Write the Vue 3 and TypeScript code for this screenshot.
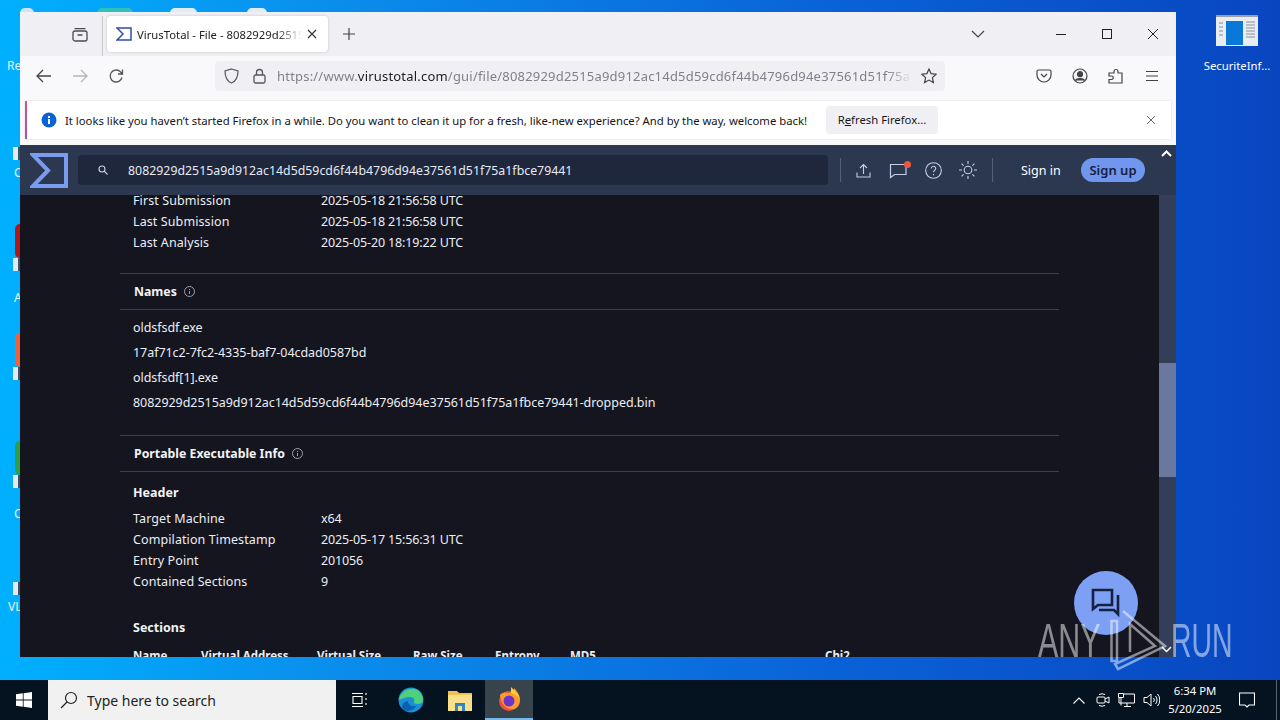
<script setup lang="ts">
const dates = [
  ['First Submission', '2025-05-18 21:56:58 UTC'],
  ['Last Submission', '2025-05-18 21:56:58 UTC'],
  ['Last Analysis', '2025-05-20 18:19:22 UTC'],
]
const names = [
  'oldsfsdf.exe',
  '17af71c2-7fc2-4335-baf7-04cdad0587bd',
  'oldsfsdf[1].exe',
  '8082929d2515a9d912ac14d5d59cd6f44b4796d94e37561d51f75a1fbce79441-dropped.bin',
]
const header = [
  ['Target Machine', 'x64'],
  ['Compilation Timestamp', '2025-05-17 15:56:31 UTC'],
  ['Entry Point', '201056'],
  ['Contained Sections', '9'],
]
const columns = [
  { label: 'Name', width: 68 },
  { label: 'Virtual Address', width: 116 },
  { label: 'Virtual Size', width: 96 },
  { label: 'Raw Size', width: 82 },
  { label: 'Entropy', width: 75 },
  { label: 'MD5', width: 255 },
  { label: 'Chi2', width: 60 },
]
const hash = '8082929d2515a9d912ac14d5d59cd6f44b4796d94e37561d51f75a1fbce79441'
const sideIcons = [
  { top: 147, label: 'C', labelTop: 166, color: '' },
  { top: 258, label: 'A', labelTop: 291, color: '#b0181c' },
  { top: 367, label: '', labelTop: 0, color: '#f0603a' },
  { top: 475, label: 'C', labelTop: 507, color: '#2f9e48' },
  { top: 582, label: 'VL', labelTop: 600, color: '' },
]
</script>

<template>
  <div class="desktop">
    <div class="wallpaper">
      <span class="peek" style="left: 20px; width: 14px; background: #cfe4f2"></span>
      <span class="peek" style="left: 97px; width: 36px; background: #2fc0b8"></span>
      <span class="peek" style="left: 170px; width: 27px; background: #e4ecf2"></span>
      <span class="peek" style="left: 247px; width: 20px; background: #e4ecf2"></span>
      <span class="side-label" style="left: 7px; top: 59px">Re</span>
      <template v-for="item in sideIcons" :key="item.top">
        <span v-if="item.color" class="side-blob" :style="{ top: item.top - 34 + 'px', background: item.color }"></span>
        <span class="side-doc" :style="{ top: item.top + 'px' }"></span>
        <span v-if="item.label" class="side-label" :style="{ left: item.label === 'VL' ? '8px' : '14px', top: item.labelTop + 'px' }">{{ item.label }}</span>
      </template>

      <div class="desk-icon">
        <svg width="42" height="31" viewBox="0 0 42 31">
          <rect width="42" height="31" fill="#e9edf1" />
          <rect width="42" height="2" fill="#9aa0a8" />
          <rect x="10" y="6" width="17" height="24" fill="#0a78d8" />
          <path d="M30 7h9M30 10h9M30 13h9M30 16h9M30 19h9M30 22h9M3 8h4M3 12h4M3 16h4M3 20h4" stroke="#8b9097" stroke-width="1" />
        </svg>
        <span>SecuriteInf...</span>
      </div>

      <section class="window">
        <div class="tabstrip">
          <svg class="ff-view" width="16" height="16" viewBox="0 0 16 16" fill="none" stroke="#4a4a55" stroke-width="1.3">
            <rect x="1" y="5" width="14" height="10" rx="2" />
            <path d="M3 2.600h10M6 9h4" stroke-linecap="round" />
          </svg>
          <div class="tab-sep"></div>
          <div class="tab">
            <svg width="16" height="14" viewBox="0 0 16 14" fill="none">
              <path d="M1 1h14v12H1l6-6z" stroke="#2f4fa8" stroke-width="1.5" />
            </svg>
            <span class="tab-title">VirusTotal - File - 8082929d2515a9d912ac14d5d59cd6f44b</span>
            <svg width="10" height="10" viewBox="0 0 10 10" stroke="#333" stroke-width="1.1"><path d="M1 1l8 8M9 1l-8 8" /></svg>
          </div>
          <svg class="new-tab" width="14" height="14" viewBox="0 0 14 14" stroke="#444" stroke-width="1.2"><path d="M7 1v12M1 7h12" /></svg>
          <svg class="tab-list" width="14" height="8" viewBox="0 0 14 8" fill="none" stroke="#444" stroke-width="1.2"><path d="M1 1l6 6 6-6" /></svg>
          <svg class="win-min" width="12" height="12" viewBox="0 0 12 12" stroke="#222"><path d="M1 6.500h10" /></svg>
          <svg class="win-max" width="12" height="12" viewBox="0 0 12 12" fill="none" stroke="#222"><rect x="1.500" y="1.500" width="9" height="9" /></svg>
          <svg class="win-close" width="12" height="12" viewBox="0 0 12 12" stroke="#222"><path d="M1 1l10 10M11 1L1 11" /></svg>
        </div>

        <div class="toolbar">
          <svg class="tb-back" width="16" height="14" viewBox="0 0 16 14" fill="none" stroke="#444" stroke-width="1.3"><path d="M15 7H1M7 1L1 7l6 6" /></svg>
          <svg class="tb-fwd" width="16" height="14" viewBox="0 0 16 14" fill="none" stroke="#b5b5bb" stroke-width="1.3"><path d="M1 7h14M9 1l6 6-6 6" /></svg>
          <svg class="tb-reload" width="16" height="16" viewBox="0 0 16 16" fill="none" stroke="#555" stroke-width="1.3"><path d="M14 9.500A6 6 0 1 1 11.800 3.200L14 5.500M14.500 1.500V6H10" /></svg>
          <div class="urlbar">
            <svg width="15" height="16" viewBox="0 0 15 16" fill="none" stroke="#55555f" stroke-width="1.2"><path d="M7.500 1L14 3c0 6-1.500 10-6.500 12C2.500 13 1 9 1 3z" /></svg>
            <svg class="lock" width="13" height="16" viewBox="0 0 13 16" fill="none" stroke="#55555f" stroke-width="1.300"><rect x="1" y="7" width="11" height="8" rx="1.500" /><path d="M3.500 7V4.500a3 3 0 0 1 6 0V7" /></svg>
            <span class="url"><span class="url-dim">https://www.</span><span class="url-host">virustotal.com</span><span class="url-dim">/gui/file/{{ hash }}</span></span>
            <svg class="star" width="16" height="16" viewBox="0 0 16 16" fill="none" stroke="#444" stroke-width="1.200"><path d="M8 1l2.100 4.600 5 .6-3.700 3.400 1 5L8 12.100 3.600 14.600l1-5L.9 6.200l5-.6z" /></svg>
          </div>
          <svg class="tb-pocket" width="16" height="14" viewBox="0 0 16 14" fill="none" stroke="#444" stroke-width="1.200"><path d="M1 2.500A1.500 1.500 0 0 1 2.500 1h11A1.500 1.500 0 0 1 15 2.500V6a7 7 0 0 1-14 0z" /><path d="M5 5l3 3 3-3" /></svg>
          <svg class="tb-account" width="16" height="16" viewBox="0 0 16 16" fill="none" stroke="#444" stroke-width="1.200"><circle cx="8" cy="8" r="7" /><circle cx="8" cy="6.200" r="2.500" fill="#444" /><path d="M3.500 12.500c1-2.500 8-2.500 9 0" fill="#444" /></svg>
          <svg class="tb-ext" width="16" height="16" viewBox="0 0 16 16" fill="none" stroke="#444" stroke-width="1.200"><path d="M1 15v-3.500h2.500a1.500 1.500 0 0 0 0-3.500H1V5h5V3.500a2 2 0 0 1 4 0V5h4v10z" /></svg>
          <svg class="tb-menu" width="14" height="12" viewBox="0 0 14 12" stroke="#444" stroke-width="1.200"><path d="M1 1.500h12M1 6h12M1 10.500h12" /></svg>
        </div>

        <div class="notice">
          <div class="notice-box">
            <svg class="notice-i" width="16" height="16" viewBox="0 0 16 16">
              <circle cx="8" cy="8" r="7.500" fill="#0a62d8" />
              <rect x="7" y="7" width="2" height="5" fill="#fff" />
              <rect x="7" y="4" width="2" height="2" fill="#fff" />
            </svg>
            <span class="notice-text">It looks like you haven’t started Firefox in a while. Do you want to clean it up for a fresh, like-new experience? And by the way, welcome back!</span>
            <span class="notice-btn">R<u>e</u>fresh Firefox...</span>
            <svg class="notice-x" width="10" height="10" viewBox="0 0 10 10" stroke="#666" stroke-width="1"><path d="M1 1l8 8M9 1l-8 8" /></svg>
          </div>
        </div>

        <div class="page">
          <header class="nav">
            <svg class="logo" width="38" height="35" viewBox="0 0 38 35" fill="none">
              <path d="M3 2h33v31H3l15-15.500z" stroke="#7a9bee" stroke-width="4" />
            </svg>
            <div class="search">
              <svg width="10" height="10" viewBox="0 0 10 10" fill="none" stroke="#c9d2e4" stroke-width="1.100"><circle cx="4" cy="4" r="3" /><path d="M6.200 6.200L9.500 9.500" /></svg>
              <span>{{ hash }}</span>
            </div>
            <div class="nav-sep"></div>
            <svg class="nav-upload" width="15" height="15" viewBox="0 0 15 15" fill="none" stroke="#c4cee4" stroke-width="1.100"><path d="M1 9.500v4.500h13V9.500M7.500 11V1.500M4 5l3.500-3.500L11 5" /></svg>
            <span class="nav-chat">
              <svg width="19" height="17" viewBox="0 0 19 17" fill="none" stroke="#c4cee4" stroke-width="1.200"><path d="M1.500 2.500h15.500v10H5.500l-4 3z" /></svg>
              <i></i>
            </span>
            <svg class="nav-help" width="17" height="17" viewBox="0 0 17 17" fill="none" stroke="#c4cee4" stroke-width="1.100"><circle cx="8.500" cy="8.500" r="7.800" /><path d="M6.300 6.500a2.200 2.200 0 1 1 3.500 1.800c-.8.600-1.300 1-1.300 2M8.500 12v1.300" /></svg>
            <svg class="nav-sun" width="20" height="20" viewBox="0 0 20 20" fill="none" stroke="#c4cee4" stroke-width="1.100"><circle cx="10" cy="10" r="3.800" /><path d="M10 1v3M10 16v3M1 10h3M16 10h3M3.600 3.600l2 2M14.400 14.400l2 2M3.600 16.400l2-2M14.400 5.600l2-2" /></svg>
            <div class="nav-sep second"></div>
            <span class="signin">Sign in</span>
            <span class="signup">Sign up</span>
            <svg class="scroll-up" width="11" height="7" viewBox="0 0 11 7" fill="none" stroke="#fff" stroke-width="2"><path d="M1 6l4.500-4.500L10 6" /></svg>
          </header>

          <div class="body">
            <main class="content">
              <div class="pad first">
                <div v-for="row in dates" :key="row[0]" class="row">
                  <span class="key">{{ row[0] }}</span><span class="val">{{ row[1] }}</span>
                </div>
              </div>

              <h2 class="section-head names-head">Names
                <svg width="11" height="11" viewBox="0 0 11 11" fill="none" stroke="#9ca0ac"><circle cx="5.500" cy="5.500" r="5" /><path d="M5.500 5v3M5.500 3v1" /></svg>
              </h2>
              <div class="pad names">
                <div v-for="name in names" :key="name" class="name">{{ name }}</div>
              </div>

              <h2 class="section-head pe-head">Portable Executable Info
                <svg width="11" height="11" viewBox="0 0 11 11" fill="none" stroke="#9ca0ac"><circle cx="5.500" cy="5.500" r="5" /><path d="M5.500 5v3M5.500 3v1" /></svg>
              </h2>
              <div class="pad">
                <h3 class="sub header-title">Header</h3>
                <div v-for="row in header" :key="row[0]" class="row">
                  <span class="key">{{ row[0] }}</span><span class="val">{{ row[1] }}</span>
                </div>
                <h3 class="sub sections-title">Sections</h3>
                <div class="thead">
                  <span v-for="col in columns" :key="col.label" :style="{ width: col.width + 'px' }">{{ col.label }}</span>
                </div>
              </div>
            </main>
            <aside class="scrollbar">
              <div class="thumb"></div>
              <svg class="scroll-down" width="11" height="7" viewBox="0 0 11 7" fill="none" stroke="#fff" stroke-width="1.500"><path d="M1 1l4.500 4.500L10 1" /></svg>
            </aside>
          </div>
        </div>
      </section>

      <button class="chat-fab" type="button">
        <svg width="30" height="30" viewBox="0 0 30 30" fill="none" stroke="#14213f" stroke-width="2.600">
          <path d="M2 2h19v15H7l-5 4z" />
          <path d="M27 7v19l-4-4H8" />
        </svg>
      </button>

      <div class="watermark">
        <span class="wm-any">ANY</span>
        <svg width="57" height="62" viewBox="0 0 57 62" fill="none" stroke="#fff" stroke-width="2.500">
          <path d="M7 12H1.500v40H7zM13 2l42 35L8 60l-3-5 40-18L20 15v28" />
        </svg>
        <span class="wm-run">RUN</span>
      </div>
    </div>

    <footer class="taskbar">
      <svg class="start" width="16" height="16" viewBox="0 0 16 16" fill="#fff">
        <path d="M0 2.300L6.800 1.300v6.300H0zM7.600 1.200L16 0v7.600H7.600zM0 8.400h6.800v6.300L0 13.700zM7.600 8.400H16V16l-8.400-1.200z" />
      </svg>
      <div class="task-search">
        <svg width="18" height="18" viewBox="0 0 18 18" fill="none" stroke="#222" stroke-width="1.200"><circle cx="11" cy="7" r="5.500" /><path d="M7 11L1 17" /></svg>
        <span>Type here to search</span>
      </div>
      <svg class="task-view" width="16" height="16" viewBox="0 0 16 16" fill="none" stroke="#fff" stroke-width="1.100"><path d="M0 1.500h11M0 14.500h11M1 4.500h9v7H1zM14 1v2M14 6v2M14 11v2" /></svg>
      <svg class="edge" width="26" height="26" viewBox="0 0 26 26">
        <circle cx="13" cy="13" r="12.500" fill="#1a8fd8" />
        <path d="M1 13C2 4 11 .5 17 2c5 1.300 8 6 8 11 0 3-3 4-6 4-2 0-3-1-3-2 1-2 0-5-4-5-4 0-7 1-11 3z" fill="#4fd07a" />
        <path d="M10 14c0 4 4 6 8 5-2 4-9 7-13 3-2-2-1-7 5-8z" fill="#0d5fb0" />
      </svg>
      <svg class="folder" width="24" height="22" viewBox="0 0 24 22">
        <path d="M0 2h9l2 2h13v18H0z" fill="#f3c14e" />
        <rect y="6" width="24" height="16" fill="#fbe08a" />
        <rect x="7" y="15" width="3" height="7" fill="#2c85c8" />
        <rect x="14" y="15" width="3" height="7" fill="#2c85c8" />
        <rect x="7" y="14" width="10" height="3" fill="#2c85c8" />
      </svg>
      <div class="fox-cell">
        <svg width="24" height="24" viewBox="0 0 24 24">
          <circle cx="12" cy="14" r="10" fill="#f0503a" />
          <path d="M3 8c1 9 6 15 14 14 4-1 6-5 6-9 0-5-3-9-6-12 0 4-3 4-5 5C9 5 5 5 3 8z" fill="#ff9a2c" />
          <path d="M14 0c3 3 8 7 9 13-2-4-5-6-9-7z" fill="#ffcf3a" />
          <circle cx="12" cy="14" r="5.500" fill="#6a35c8" />
        </svg>
      </div>
      <div class="tray">
        <svg class="tray-up" width="12" height="7" viewBox="0 0 12 7" fill="none" stroke="#fff" stroke-width="1.100"><path d="M.5 6.500L6 1l5.500 5.500" /></svg>
        <svg width="14" height="16" viewBox="0 0 14 16" fill="none" stroke="#fff"><path d="M3 2.500a7 7 0 0 1 6 0M3 13.500a7 7 0 0 0 6 0" /><rect x="1" y="5" width="8" height="6" rx="1" /><path d="M9 7l4-2v6l-4-2" /></svg>
        <svg width="17" height="16" viewBox="0 0 17 16" fill="none" stroke="#fff"><path d="M.5 1.500h5v4h-5zM6 2h10.500v9H1V6M3 5.500v8M6 14.500h7M9 11v3" /></svg>
        <svg width="17" height="14" viewBox="0 0 17 14" fill="none" stroke="#fff"><path d="M1 4.500h3L8 1v12L4 9.500H1zM10.500 5a3 3 0 0 1 0 4M12.500 3a6 6 0 0 1 0 8M14.500 1a9 9 0 0 1 0 12" /></svg>
        <div class="clock"><span>6:34 PM</span><span>5/20/2025</span></div>
        <svg class="notify" width="16" height="16" viewBox="0 0 16 16" fill="none" stroke="#fff" stroke-width="1.100"><path d="M.5 1h15v12H10l-2 2-2-2H.5z" /></svg>
        <div class="show-desktop"></div>
      </div>
    </footer>
  </div>
</template>

<style>
html,
body {
  margin: 0;
  background: #04131f;
}
</style>

<style scoped>
.desktop {
  width: 1280px;
  height: 720px;
  display: flex;
  flex-direction: column;
  overflow: hidden;
  font-family: "Noto Sans", sans-serif;
}
.wallpaper {
  position: relative;
  flex: 1;
  background: linear-gradient(90deg, #00b0fe 0%, #0a8fec 25%, #0a62d8 65%, #0846c0 100%);
}
.peek {
  position: absolute;
  top: 8px;
  height: 5px;
  border-radius: 6px 6px 0 0;
}
.side-doc {
  position: absolute;
  left: 13px;
  width: 7px;
  height: 13px;
  background: linear-gradient(90deg, #e3eaf0 65%, #3a5168 65%);
}
.side-blob {
  position: absolute;
  left: 15px;
  width: 5px;
  height: 34px;
  border-radius: 5px 0 0 5px;
}
.side-label {
  position: absolute;
  color: #e8f4ff;
  font-size: 12px;
  line-height: 14px;
}
.desk-icon {
  position: absolute;
  left: 1197px;
  top: 15px;
  width: 80px;
  display: flex;
  flex-direction: column;
  align-items: center;
  gap: 13px;
  color: #fff;
  font-size: 11.300px;
  line-height: 14px;
}
.desk-icon span {
  white-space: nowrap;
}
.window {
  position: absolute;
  left: 20px;
  top: 12px;
  width: 1156px;
  height: 645px;
  display: flex;
  flex-direction: column;
  overflow: hidden;
  background: #f9f9fb;
}
.tabstrip {
  height: 44px;
  flex: none;
  display: flex;
  align-items: center;
  background: #f0f0f4;
}
.ff-view {
  margin-left: 52px;
}
.tab-sep {
  width: 1px;
  height: 40px;
  margin: 4px 0 0 14px;
  background: #c8c8cf;
}
.tab {
  width: 221px;
  height: 36px;
  margin-left: 4px;
  box-sizing: border-box;
  padding: 0 11px 0 9px;
  display: flex;
  align-items: center;
  gap: 5px;
  background: #fff;
  border-radius: 4px;
  box-shadow: 0 0 3px rgba(0, 0, 0, 0.18);
}
.tab-title {
  flex: 1;
  overflow: hidden;
  white-space: nowrap;
  font-size: 11.300px;
  color: #222;
  -webkit-mask-image: linear-gradient(90deg, #000 85%, transparent 100%);
  mask-image: linear-gradient(90deg, #000 85%, transparent 100%);
}
.new-tab {
  margin-left: 14px;
}
.tab-list {
  margin-left: 615px;
}
.win-min {
  margin-left: 70px;
}
.win-max {
  margin-left: 34px;
}
.win-close {
  margin-left: 34px;
}
.toolbar {
  height: 44px;
  flex: none;
  box-sizing: border-box;
  padding-bottom: 4px;
  display: flex;
  align-items: center;
  background: #f9f9fb;
}
.tb-back {
  margin-left: 16px;
}
.tb-fwd {
  margin-left: 20px;
}
.tb-reload {
  margin-left: 20px;
}
.urlbar {
  width: 730px;
  height: 30px;
  margin-left: 91px;
  box-sizing: border-box;
  padding: 0 8px 0 9px;
  display: flex;
  align-items: center;
  background: #f0f0f4;
  border-radius: 4px;
}
.lock {
  margin-left: 14px;
}
.urlbar > svg {
  flex: none;
}
.url {
  flex: 1;
  margin: 0 9px 0 11px;
  overflow: hidden;
  white-space: nowrap;
  font-size: 13px;
  letter-spacing: 0.2px;
  -webkit-mask-image: linear-gradient(90deg, #000 96%, transparent 100%);
  mask-image: linear-gradient(90deg, #000 96%, transparent 100%);
}
.url-dim {
  color: #80808a;
}
.url-host {
  color: #1c1b22;
}
.tb-pocket {
  margin-left: 91px;
}
.tb-account {
  margin-left: 20px;
}
.tb-ext {
  margin-left: 20px;
}
.tb-menu {
  margin-left: 21px;
}
.notice {
  height: 45px;
  flex: none;
  box-sizing: border-box;
  padding: 1px 5px 6px 5px;
  background: #f9f9fb;
}
.notice-box {
  height: 38px;
  display: flex;
  align-items: center;
  background: #fff;
  border-left: 2px solid;
  border-image: linear-gradient(180deg, #e0566e, #9a4fd0) 1;
  box-shadow: 0 0 2px rgba(0, 0, 0, 0.12);
}
.notice-i {
  margin-left: 14px;
  flex: none;
}
.notice-text {
  margin-left: 8px;
  width: 742px;
  flex: none;
  white-space: nowrap;
  font-size: 11.300px;
  color: #15141a;
}
.notice-btn {
  margin-left: 19px;
  width: 112px;
  height: 28px;
  flex: none;
  line-height: 28px;
  text-align: center;
  white-space: nowrap;
  font-size: 11.300px;
  color: #15141a;
  background: #f0f0f4;
  border-radius: 4px;
}
.notice-x {
  margin-left: 208px;
  flex: none;
}
.page {
  position: relative;
  flex: 1;
  min-height: 0;
  display: flex;
  flex-direction: column;
  background: #14151f;
}
.nav {
  position: relative;
  z-index: 1;
  height: 50px;
  flex: none;
  display: flex;
  align-items: center;
  color: #fff;
  background: #2c3850;
}
.logo {
  margin-left: 10px;
}
.search {
  width: 750px;
  height: 30px;
  margin-left: 10px;
  box-sizing: border-box;
  padding-left: 20px;
  display: flex;
  align-items: center;
  gap: 20px;
  background: #1e273c;
  border-radius: 4px;
  font-size: 12.300px;
  letter-spacing: 0.03px;
  color: #e6ebf5;
}
.nav-sep {
  width: 1px;
  height: 24px;
  margin-left: 12px;
  background: #566178;
}
.nav-sep.second {
  margin-left: 14px;
}
.nav-upload {
  margin-left: 15px;
}
.nav-chat {
  position: relative;
  display: flex;
  margin-left: 18px;
}
.nav-chat i {
  position: absolute;
  right: -3px;
  top: -1px;
  width: 7px;
  height: 7px;
  border-radius: 50%;
  background: #f0553f;
}
.nav-help {
  margin-left: 17px;
}
.nav-sun {
  margin-left: 16px;
}
.signin {
  margin-left: 28px;
  width: 40px;
  flex: none;
  white-space: nowrap;
  font-size: 12.500px;
}
.signup {
  margin-left: 20px;
  width: 64px;
  height: 24px;
  flex: none;
  line-height: 24px;
  text-align: center;
  white-space: nowrap;
  border-radius: 12px;
  background: #7196ee;
  color: #14213f;
  font-size: 13px;
  font-weight: 600;
}
.scroll-up {
  position: absolute;
  right: 4px;
  top: 5px;
}
.body {
  flex: 1;
  min-height: 0;
  display: flex;
}
.content {
  flex: 1;
  min-width: 0;
  overflow: hidden;
  color: #eceef3;
  font-size: 12.500px;
}
.pad {
  width: 939px;
  margin-left: 100px;
  box-sizing: border-box;
  padding-left: 13px;
}
.first {
  margin-top: -5px;
}
.row {
  display: flex;
  height: 21px;
  line-height: 21px;
  white-space: nowrap;
}
.key {
  width: 188px;
  flex: none;
  letter-spacing: 0.1px;
}
.val {
  letter-spacing: -0.13px;
}
.section-head {
  width: 939px;
  height: 37px;
  margin: 0 0 0 100px;
  box-sizing: border-box;
  padding-left: 14px;
  display: flex;
  align-items: center;
  gap: 7px;
  border-top: 1px solid #3e404b;
  border-bottom: 1px solid #3e404b;
  color: #f2f3f6;
  font-size: 12.300px;
  font-weight: 700;
}
.names-head {
  margin-top: 20px;
}
.names {
  padding-top: 5px;
  padding-bottom: 20px;
}
.name {
  height: 25px;
  line-height: 25px;
  white-space: nowrap;
  letter-spacing: -0.05px;
}
.sub {
  margin: 0;
  font-size: 12.500px;
  font-weight: 700;
  color: #f2f3f6;
}
.header-title {
  height: 21px;
  line-height: 21px;
  margin-top: 10px;
  margin-bottom: 5px;
}
.sections-title {
  height: 21px;
  line-height: 21px;
  margin-top: 25px;
}
.thead {
  display: flex;
  margin-top: 7px;
  height: 21px;
  line-height: 21px;
  font-size: 11.500px;
  font-weight: 700;
  white-space: nowrap;
}
.scrollbar {
  position: relative;
  width: 17px;
  flex: none;
  background: #343e58;
}
.thumb {
  position: absolute;
  left: 0;
  top: 168px;
  width: 17px;
  height: 114px;
  background: #6a78a0;
}
.scroll-down {
  position: absolute;
  left: 2px;
  bottom: 4px;
}
.chat-fab {
  position: absolute;
  left: 1074px;
  top: 571px;
  width: 64px;
  height: 64px;
  padding: 0;
  border: 0;
  border-radius: 50%;
  display: flex;
  align-items: center;
  justify-content: center;
  background: #7da0f5;
}
.watermark {
  position: absolute;
  left: 1038px;
  top: 609px;
  display: flex;
  align-items: center;
  height: 62px;
  opacity: 0.5;
  color: #fff;
  font-family: "Liberation Sans", sans-serif;
  font-size: 49px;
  line-height: 62px;
}
.wm-any,
.wm-run {
  display: inline-block;
  width: 62px;
  flex: none;
  white-space: nowrap;
  transform-origin: left center;
}
.wm-any {
  transform: scaleX(0.62);
}
.wm-run {
  transform: scaleX(0.58);
}
.watermark svg {
  flex: none;
  margin: 0 4px 0 10px;
}
.taskbar {
  height: 40px;
  flex: none;
  display: flex;
  align-items: center;
  background: #04131f;
}
.taskbar > svg {
  flex: none;
}
.start {
  margin-left: 16px;
}
.task-search {
  width: 288px;
  height: 40px;
  flex: none;
  margin-left: 16px;
  box-sizing: border-box;
  padding-left: 12px;
  display: flex;
  align-items: center;
  gap: 9px;
  background: #f1f1f1;
  color: #222;
  font-size: 14px;
}
.task-view {
  margin-left: 16px;
}
.edge {
  margin-left: 30px;
}
.folder {
  margin-left: 24px;
}
.fox-cell {
  width: 48px;
  height: 40px;
  flex: none;
  margin-left: 13px;
  box-sizing: border-box;
  display: flex;
  align-items: center;
  justify-content: center;
  background: #37444c;
  border-bottom: 2px solid #76b9ed;
}
.tray {
  flex: 1;
  min-width: 0;
  height: 40px;
  display: flex;
  align-items: center;
  color: #fff;
  padding-left: 540px;
  gap: 8px;
}
.tray > svg {
  flex: none;
}
.tray-up {
  margin-right: 3px;
}
.clock {
  width: 70px;
  flex: none;
  margin-left: -8px;
  display: flex;
  flex-direction: column;
  align-items: center;
  font-size: 11.300px;
  line-height: 18px;
}
.notify {
  margin-left: 1px;
}
.show-desktop {
  width: 1px;
  height: 40px;
  flex: none;
  margin-left: 13px;
  background: #5a6670;
}
</style>
